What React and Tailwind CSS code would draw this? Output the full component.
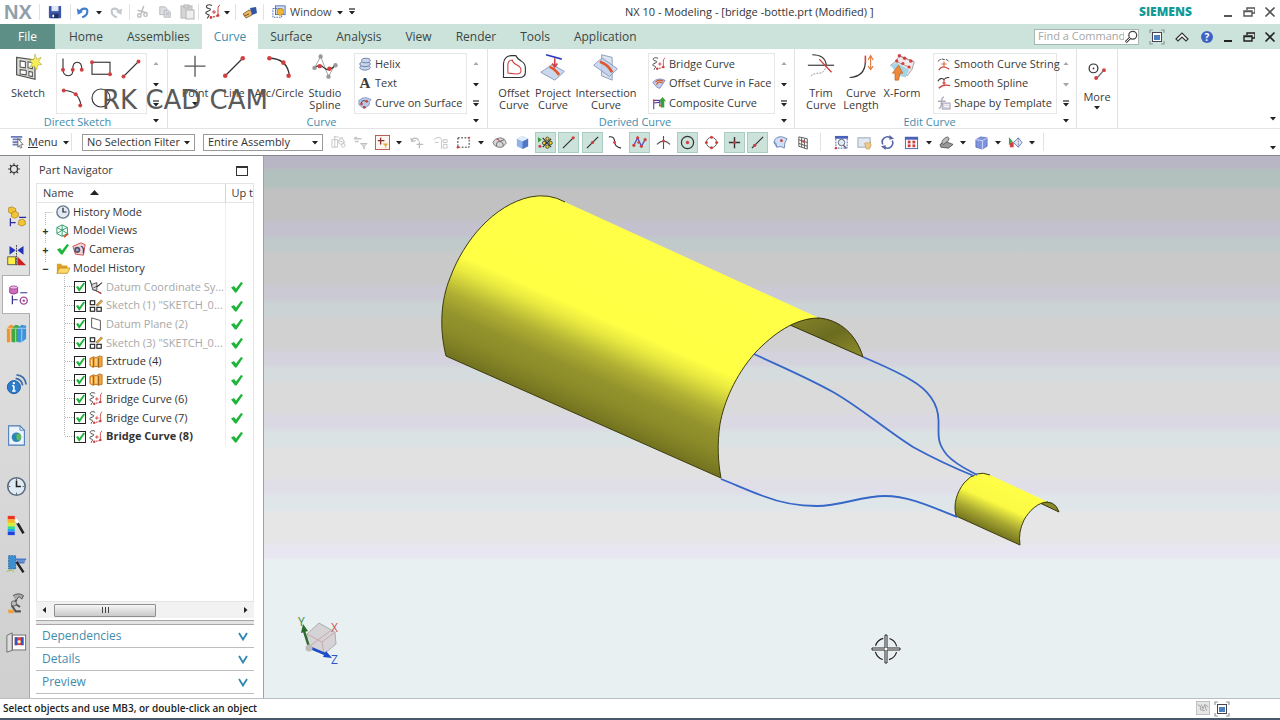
import React, { useState } from 'react';

const K = '#333';
const R = '#d04040';

// 16x16 toolbar and tree icons
const small = {
  save: <><rect x="1" y="1" width="14" height="14" rx="1" fill="#3c55a8" /><rect x="4" y="1" width="8" height="6" fill="#dfe6f7" /><rect x="4" y="10" width="8" height="5" fill="#1f2f66" /><rect x="5" y="11" width="2" height="3" fill="#fff" /></>,
  undo: <><path d="M4 8c3-5 9-5 9-1 0 4-3 6-6 7" fill="none" stroke="#3f7fd0" strokeWidth="2.4" /><path d="M1 4l1 7 6-3z" fill="#3f7fd0" /></>,
  redo: <><path d="M12 8c-3-5-9-5-9-1 0 4 3 6 6 7" fill="none" stroke="#c3c8cc" strokeWidth="2.4" /><path d="M15 4l-1 7-6-3z" fill="#c3c8cc" /></>,
  cut: <g fill="none" stroke="#bbb" strokeWidth="1.6"><path d="M10 1L7 10M3 6l11 3" /><circle cx="5" cy="12" r="2" /><circle cx="12" cy="11" r="2" /></g>,
  copy: <g fill="#dcdde2" stroke="#b5b7bf"><path d="M2 2h6l2 2v7H2z" /><path d="M7 6h5l2 2v6H7z" /><path d="M9 9h4M9 11h4" /></g>,
  paste: <g fill="#d5d5d5" stroke="#b5b5b5"><rect x="2" y="2" width="11" height="12" /><rect x="5" y="1" width="5" height="3" /><rect x="7" y="6" width="8" height="9" fill="#eee" /></g>,
  bridge: <><path d="M7 1.500C4 0 1 1 1.500 3s4 1 4 2.500S2 7 1 8.500s2 1.500 3 2.500-2 2-1.500 3.500" fill="none" stroke="#444" strokeWidth="1.100" /><path d="M5 13.500l5-1 3-1" fill="none" stroke={R} strokeWidth="1.300" strokeDasharray="2 1" /><path d="M15 1c-2 1-2 3-2 5v5M9 6v4M7 8h4" fill="none" stroke={R} strokeWidth="1" /><circle cx="6" cy="13.500" r="1.400" fill={R} /><circle cx="13" cy="11.500" r="1.400" fill={R} /></>,
  hand: <><path d="M1 10l6-4 4 1-1 4-6 3z" fill="#e8b765" stroke="#7a5520" strokeWidth=".8" /><path d="M8 4l6-1 1 6-5 2z" fill="#3355a8" /><path d="M2 12l5-2" stroke="#7a5520" /></>,
  win: <><rect x="4" y="1" width="11" height="10" fill="#cfe0f8" stroke="#4468b0" /><rect x="1" y="4" width="10" height="10" fill="none" stroke="#4468b0" strokeDasharray="2 1" /><path d="M6 5l4-1 3 1v5l-4 2-3-2z" fill="#f2b632" stroke="#b57d10" strokeWidth=".7" /></>,
  helix: <g fill="#c9d5e8" stroke="#5e78a8"><ellipse cx="8" cy="12" rx="6" ry="3" /><ellipse cx="8" cy="8" rx="6" ry="3" /><ellipse cx="9" cy="4" rx="5" ry="2.6" /></g>,
  surfCurve: <><path d="M1 5q4-4 9-3l5 2q-3 2-2 6l-5 4q-4-1-7-4z" fill="#b9c8e6" stroke="#7088b8" strokeWidth=".8" /><path d="M4 10C3 5 7 4 10 7M6 12l3 1" fill="none" stroke="#333" /><circle cx="4" cy="9" r="1.5" fill={R} /><circle cx="10" cy="6" r="1.5" fill={R} /><circle cx="7" cy="13" r="1.4" fill={R} /></>,
  offsetFace: <><path d="M1 7q6-6 14-2l-6 9q-4 0-8-7z" fill="#c6cfee" stroke="#6470b8" strokeWidth=".8" /><path d="M5 10q3-5 7-2M4 7q4-4 9-1" fill="none" stroke="#d05a2a" strokeWidth="1.4" /></>,
  composite: <><path d="M2 15V5h7v6M2 8l8-1" fill="none" stroke="#5a3c9a" strokeWidth="1.2" /><path d="M10 13V6H8l4-5 4 5h-2v7z" fill="#38a038" /><circle cx="2" cy="5" r="1.1" fill={R} /><circle cx="9" cy="11" r="1.1" fill={R} /></>,
  smoothString: <><path d="M1 5q4-4 7-2 4-1 6 3" fill="none" stroke={K} strokeDasharray="4 1" /><path d="M2 15q4-7 12-1" fill="none" stroke={R} strokeWidth="1.4" /><path d="M8 5v6M5 8h6" stroke="#e06a3a" strokeWidth="1.3" /></>,
  smoothSpline: <><path d="M1 6q3-5 7-2 3-3 6-2" fill="none" stroke={K} strokeWidth="1.2" /><path d="M2 14q5-5 13-3M8 4v6M6 8h4" fill="none" stroke={R} strokeWidth="1.4" /></>,
  shapeTpl: <><path d="M8 1Q5 2 5 8t-3 6M1 6h9M5 9l3 1" fill="none" stroke="#b0aab8" strokeWidth="1.6" /><rect x="6" y="8" width="9" height="7" fill="#d4cfdc" stroke="#aaa3b4" /><path d="M8 10h6M8 12h6" stroke="#fff" /></>,
  menu: <><path d="M1 2h13M3 5h10M3 8h7M3 11h6" stroke="#6d7ab8" strokeWidth="2" /><path d="M9 4l6 7-3 .3 1.500 3-1.600.7-1.400-3L9 14z" fill="#fff" stroke="#444" strokeWidth=".8" /></>,
  filt1: <g fill="none" stroke="#c4c4c4"><path d="M1 5h6v8H1zM3 2h5M4 1v12M8 6l7 2M9 3h4" /><circle cx="11" cy="7" r="3" /><circle cx="13" cy="11" r="2" /></g>,
  filt2: <><path d="M1 4h8M1 4l3-2M6 7H2" stroke="#c4c4c4" strokeWidth="1.6" /><path d="M8 9h7l-3 3v3l-1-3z" fill="#ddd" stroke="#bbb" /></>,
  filt3: <><rect x=".5" y=".5" width="15" height="15" fill="#fdf6ee" stroke="#b85450" /><path d="M6 3v7M3 6h7" stroke="#883030" strokeWidth="1.4" /><path d="M8 9h6l-2 3v2h-1v-2z" fill="#e8a93c" /></>,
  filt4: <g fill="none" stroke="#bcbcbc" strokeWidth="1.4"><path d="M2 6q1-4 6-2l1 2M1 3l1 4 4-1M10 7v7M7 10h7" /></g>,
  filt5: <g fill="none" stroke="#c4c4c4"><path d="M1 5q3-4 7-2l2 3M2 8h4M9 6v9M11 5h4v3h-4zM11 10h4v4h-4z" /></g>,
  marquee: <><rect x="2" y="3" width="12" height="10" fill="none" stroke={K} strokeDasharray="2 1.5" /><circle cx="2" cy="13" r="1.3" fill={R} /><circle cx="14" cy="3" r="1.1" fill={R} /></>,
  dome: <><path d="M1 8q1-4 8-5 6 1 6 6l-4 4q-8 1-10-5z" fill="#d6d6da" stroke="#777" /><path d="M5 12q-1-5 3-5t4 5M8 7l5-2" fill="none" stroke="#666" /><path d="M5 4l3 2" stroke={R} strokeWidth="1.200" /></>,
  cubeBlue: <><path d="M8 1l6 3v8l-6 3-6-3V4z" fill="#8fb2ea" /><path d="M8 1l6 3-6 3-6-3z" fill="#e2edfc" /><path d="M8 7l6-3v8l-6 3z" fill="#4f77c4" /></>,
  snapAll: <><path d="M0 2l4 3-4 3z" fill="#3a9b3a" /><path d="M5 3l9 10M14 4l-9 9" stroke={K} strokeWidth="1.200" /><g fill="#f0d020" stroke="#333" strokeWidth=".8"><circle cx="10" cy="4" r="1.800" /><circle cx="13.500" cy="8.500" r="1.800" /><circle cx="6.500" cy="8.500" r="1.800" /><circle cx="10" cy="12.500" r="1.800" /></g><circle cx="2" cy="12" r="1.600" fill={R} /></>,
  endPt: <><path d="M2 14L13 3" stroke={K} strokeWidth="1.3" /><circle cx="13" cy="3" r="1.7" fill={R} /></>,
  midPt: <><path d="M2 14L14 2" stroke={K} strokeWidth="1.3" /><circle cx="8" cy="8" r="1.7" fill={R} /></>,
  ctrlPt: <><path d="M1 2q6-1 6 5t7 7" fill="none" stroke={K} strokeWidth="1.2" /><circle cx="7" cy="8" r="1.5" fill={R} /></>,
  splinePt: <><path d="M2 11L6 3l4 9 4-7" fill="none" stroke="#5a4cc0" strokeWidth="1.4" /><g fill={R}><circle cx="2" cy="11" r="1.7" /><circle cx="6" cy="3" r="1.7" /><circle cx="10" cy="12" r="1.7" /><circle cx="14" cy="5" r="1.7" /><circle cx="7" cy="8" r="1.4" /></g></>,
  interPt: <><path d="M8 1v14M1 10q7-7 14 0" fill="none" stroke="#555" strokeWidth="1.2" /><circle cx="8" cy="6.500" r="1.5" fill={R} /></>,
  center: <><circle cx="8" cy="8" r="6.500" fill="none" stroke={K} strokeWidth="1.3" /><circle cx="8" cy="8" r="1.8" fill={R} /></>,
  quad: <><circle cx="8" cy="8" r="5.500" fill="none" stroke="#555" /><g fill={R}><circle cx="8" cy="2.500" r="1.6" /><circle cx="8" cy="13.500" r="1.6" /><circle cx="2.500" cy="8" r="1.6" /><circle cx="13.500" cy="8" r="1.6" /></g></>,
  exist: <><path d="M8 2v12M2 8h12" stroke={K} strokeWidth="1.5" /><circle cx="8" cy="8" r="1.4" fill={R} /></>,
  onCurve: <><path d="M2 14L14 2" stroke={K} strokeWidth="1.3" /><circle cx="5" cy="11" r="1.8" fill={R} /></>,
  face: <><path d="M1 8q1-7 9-6l5 2q-3 3-3 10-3-3-8-1z" fill="#cfdff5" stroke="#6b86b8" /><path d="M1 8q2-2 3 5" fill="none" stroke="#6b86b8" /><circle cx="9" cy="6" r="1.5" fill={R} /></>,
  grid: <g fill="none" stroke="#555"><path d="M3 2l9 2v11l-9-3zM6 3v10M9 4v10M3 5l9 3M3 9l9 3" /><circle cx="8" cy="7" r="1.3" fill={R} stroke="none" /></g>,
  fit: <><rect x="1" y="1" width="14" height="3" fill="#4b60b8" /><path d="M2 4v10h12V4" fill="none" stroke="#4b60b8" strokeDasharray="2 1" /><circle cx="8" cy="8" r="3.500" fill="#dcecf5" stroke="#667" /><path d="M10 11l3 3" stroke="#667" strokeWidth="1.6" /><circle cx="2" cy="14" r="1.3" fill={R} /></>,
  pan: <><rect x="1" y="3" width="13" height="10" fill="#e2e8f2" stroke="#9aa4b8" /><path d="M8 9l2-1 2 1 2-2 1 4-2 4h-3z" fill="#edc98a" stroke="#c09a55" strokeWidth=".7" /></>,
  rotate: <><path d="M3 10a5.500 5.500 0 0 1 8-7M13 6a5.500 5.500 0 0 1-8 7" fill="none" stroke="#5866a8" strokeWidth="1.7" /><path d="M10 0l5 4-5 1zM6 16l-5-4 5-1z" fill="#5866a8" /></>,
  views: <><rect x="1.500" y="2.500" width="13" height="12" fill="#fff" stroke="#4b60b8" /><rect x="1" y="2" width="14" height="3" fill="#4b60b8" /><g fill={R}><rect x="4" y="6" width="3" height="3" /><rect x="9" y="6" width="3" height="3" /><rect x="4" y="10" width="3" height="3" /><rect x="9" y="10" width="3" height="3" /></g></>,
  shade: <><path d="M1 10l6-3 8 3-5 4-8-1z" fill="#999" stroke="#444" strokeWidth=".8" /><path d="M3 9Q3 4 9 2q3 1 1 4L5 10z" fill="#bbb" stroke="#444" strokeWidth=".8" /></>,
  cube: <><path d="M2 5l5-3 7 1v9l-5 3-7-2z" fill="#7d93e0" stroke="#5064b0" strokeWidth=".7" /><path d="M2 5l7 1 5-3M9 6v9" fill="none" stroke="#d2dbfa" /></>,
  clip: <><path d="M1 2l4 5-4 4z" fill="#42a350" /><path d="M2 9l4-2v6H2z" fill={R} /><path d="M6 8l5-5 4 5-4 5z" fill="#e2e8f5" stroke="#6a7ab0" /><path d="M11 3v10" stroke="#6a7ab0" strokeDasharray="2 1" /></>,
  clock: <><circle cx="8" cy="8" r="7" fill="#e2ebf5" stroke="#69788a" strokeWidth="1.6" /><path d="M8 3v5h4" fill="none" stroke="#222" strokeWidth="1.4" /></>,
  modelViews: <><path d="M7 1l6 3v7l-6 3-6-3V4zM1 4l6 3 6-3M7 1v13M1 11l6-4 6 4" fill="none" stroke="#2c9c6c" strokeWidth="1.1" /><path d="M9 15l5-4" stroke="#d4502c" strokeWidth="2" /></>,
  camera: <><path d="M1 5l9-4 5 2-2 12-9-1z" fill="#f5d6d6" stroke="#d03c3c" /><circle cx="6" cy="9" r="3.500" fill="#556" /><circle cx="6" cy="9" r="1.5" fill="#9ad" /><path d="M10 5q4 0 3 8" fill="none" stroke="#334a99" strokeWidth="1.6" /></>,
  folder: <><path d="M1 3h5l1 2h6v9H1z" fill="#dda225" /><path d="M4 8h12l-3 6H1z" fill="#ffd968" stroke="#b98318" strokeWidth=".8" /></>,
  csys: <><path d="M1 0l4 11 9 4M5 11l10-8" fill="none" stroke="#333" strokeWidth="1.2" /><path d="M3 5l6-2v9l-5-1zM5 9l7-3" fill="#ddd" stroke="#333" strokeWidth=".9" /><path d="M10 13l4 3" stroke={R} strokeWidth="1.4" /></>,
  sketch: <><g fill="none" stroke="#222" strokeWidth="1.3"><rect x="1.500" y="2" width="5" height="4.500" /><rect x="1.500" y="9.500" width="5" height="4.500" /><rect x="9" y="9.500" width="5" height="4.500" /></g><path d="M8 7l6-6 1.500 1.500L10 8z" fill="#e8a93c" stroke="#7a5520" strokeWidth=".6" /></>,
  plane: <path d="M3 1l10 3v11L3 12z" fill="#fff" stroke="#444" />,
  extrude: <><path d="M1 4l4-2 3 1 4-2 3 1v11l-4 1-3-1-4 1-3-2z" fill="#f2a640" stroke="#a8600f" strokeWidth=".8" /><path d="M5 3v11M11 3v11" stroke="#8a520c" /><path d="M3 5v7M8 4v8" stroke="#ffe0a8" strokeWidth="1.500" /></>,
};

// 32x32 ribbon icons
const large = {
  sketch: <><path d="M3 5l21 3v22L3 25z" fill="#d9ddd5" stroke="#555" strokeWidth="1.400" /><path d="M7 9l6 1v7l-6-1zM16 10l5 1v7l-5-1zM7 19l7 1v5l-7-1zM17 21l4 1v5l-4-1z" fill="#fff" stroke="#555" strokeWidth="1.200" /><path d="M24 1l2 6 5-2-3 5 4 3-5 1-1 5-3-4-5 1 3-4-3-4 5-1z" fill="#f5ee5a" stroke="#aaa235" strokeWidth=".6" /></>,
  point: <path d="M16 3v24M4 15h24" stroke="#555" strokeWidth="1.500" />,
  line: <><path d="M6 26L26 6" stroke={K} strokeWidth="1.5" /><circle cx="6" cy="26" r="2.600" fill={R} /><circle cx="26" cy="6" r="2.600" fill={R} /></>,
  arc: <><path d="M5 6q20 0 23 20" fill="none" stroke={K} strokeWidth="1.5" /><circle cx="5" cy="6" r="2.600" fill={R} /><circle cx="21" cy="11" r="2.600" fill={R} /><circle cx="27" cy="26" r="2.600" fill={R} /></>,
  spline: <><path d="M4 17L11 4l9 23 7-13" fill="none" stroke="#999" /><path d="M4 17q6-5 11 0t13-3" fill="none" stroke={K} strokeWidth="1.3" /><g fill="#999"><circle cx="4" cy="17" r="2.500" /><circle cx="11" cy="4" r="2.500" /><circle cx="20" cy="27" r="2.500" /><circle cx="28" cy="14" r="2.500" /></g><circle cx="10" cy="15" r="2.500" fill={R} /><circle cx="21" cy="18" r="2.500" fill={R} /></>,
  offset: <><path d="M4 28V12q1-9 9-9h5q2 4 6 6 5 3 5 8v5q0 6-7 6z" fill="#fff" stroke={K} strokeWidth="1.3" /><path d="M9 23V14q0-6 5-6 1 4 6 6 4 2 4 6t-5 4z" fill="none" stroke={R} strokeWidth="1.2" /></>,
  project: <><path d="M2 22q9-6 13-9l14 8q-4 4-11 10z" fill="#cbd9ee" stroke="#8295b8" /><path d="M12 16q5 1 11 9" fill="none" stroke="#e0572e" strokeWidth="3" /><path d="M8 2l18 5" stroke="#2c3cc0" strokeWidth="1.8" /><path d="M18 6v9M15 12l3 4 3-4" fill="none" stroke={R} strokeWidth="1.8" /></>,
  intersect: <><path d="M11 2l12 3v26l-12-5z" fill="#dce4ee" stroke="#8295b8" /><path d="M2 14q7-7 10-8l17 12-9 9z" fill="#bfd0ec" stroke="#8295b8" fillOpacity=".8" /><path d="M9 10q9 3 14 12" fill="none" stroke="#e0572e" strokeWidth="3" /></>,
  trim: <><path d="M1 14h30" stroke={K} strokeWidth="1.3" /><path d="M6 2q15 0 16 12" fill="none" stroke={K} strokeWidth="1.3" /><path d="M22 14q-2 9-8 9-6 0-11 4" fill="none" stroke="#777" strokeDasharray="2 1.500" /><path d="M14 7l14 15" stroke={R} strokeWidth="1.6" /></>,
  length: <><path d="M3 28q17-1 18-17" fill="none" stroke={K} strokeWidth="1.4" /><path d="M21 12V3" stroke={R} strokeWidth="1.8" /><path d="M27 4v14M24 8l3-5 3 5M24 15l3 4 3-4" fill="none" stroke="#e07a3a" strokeWidth="1.3" /></>,
  xform: <><path d="M3 14q6-3 10-11l17 7q-1 9-8 16z" fill="#f1e8ea" stroke="#999" /><path d="M3 14l7-3 14 8-4 9-9-3z" fill="#a3d5e6" /><g stroke="#b98080" fill="none"><path d="M12 3l17 7M8 9l18 8" /></g><g fill={R}><circle cx="13" cy="3" r="2" /><circle cx="19" cy="6" r="2" /><circle cx="26" cy="9" r="2" /><circle cx="10" cy="9" r="1.800" /><circle cx="17" cy="12" r="1.800" /><circle cx="24" cy="16" r="1.800" /></g><path d="M8 31v-8H5l7-9 5 9h-3l-2 8z" fill="#f08a3a" stroke="#b85a18" strokeWidth=".7" /></>,
  more: <><circle cx="12" cy="13" r="5" fill="none" stroke={K} strokeWidth="1.4" /><circle cx="12" cy="13" r="1" fill={K} /><path d="M16 24l7-8" stroke="#777" strokeWidth="1.6" /><circle cx="15" cy="24" r="2.200" fill={R} /><circle cx="24" cy="15" r="2.200" fill={R} /></>,
  profile: <><path d="M4 2v14q0 9 7 9t6-9q0-9 6-9t6 9" fill="none" stroke={K} strokeWidth="1.500" /><g fill={R}><circle cx="4" cy="17" r="2.600" /><circle cx="17" cy="17" r="2.600" /><circle cx="29" cy="17" r="2.600" /></g></>,
  rect: <><rect x="4" y="7" width="24" height="16" fill="none" stroke={K} strokeWidth="1.5" /><circle cx="4" cy="7" r="2.600" fill={R} /><circle cx="28" cy="23" r="2.600" fill={R} /></>,
  circle: <circle cx="16" cy="16" r="12" fill="none" stroke={K} strokeWidth="1.500" />,
};

// resource bar icons, 24x24
const side = {
  gear: <><circle cx="12" cy="12" r="6" fill="none" stroke="#333" strokeWidth="2" /><path d="M12 2v4M12 18v4M2 12h4M18 12h4M5 5l3 3M16 16l3 3M19 5l-3 3M5 19l3-3" stroke="#333" strokeWidth="2" /></>,
  assembly: <><g fill="#f3c535" stroke="#a87e12" strokeWidth=".8"><path d="M3 2l4-1 4 2v5l-5 1-3-2z" /><path d="M7 7l4-1 3 2v4l-4 2-4-2z" /><path d="M15 16l4-1 3 2v4l-4 2-4-2z" /></g><path d="M5 14v9M5 19h6M15 13h8" stroke="#2a2aa0" strokeWidth="1.4" fill="none" /></>,
  constraint: <><path d="M4 1l7 5-7 5zM20 1l-7 5 7 5z" fill="#2233b8" /><path d="M12 0v24" stroke="#333" strokeDasharray="2 1" /><rect x="2" y="13.500" width="9" height="9" fill="#ffee44" stroke="#555" /><path d="M13 13v10h10z" fill="#c82222" /></>,
  part: <><path d="M2 4q5-3 9 0v6q-5 3-9 0z" fill="#cf6bc0" stroke="#8a3380" /><ellipse cx="6.500" cy="4" rx="4.500" ry="1.800" fill="#eeb5e6" stroke="#8a3380" strokeWidth=".7" /><path d="M5 13v10M5 18h6M14 10h8" stroke="#333388" strokeWidth="1.4" fill="none" /><circle cx="18" cy="19" r="4" fill="none" stroke="#a04a98" strokeWidth="1.6" /><circle cx="18" cy="19" r="1.400" fill="#a04a98" /></>,
  books: <><path d="M1 6l4-4 4 1v17l-4 2H1z" fill="#f0922e" /><path d="M7 6l4-4 4 1v17l-4 2H7z" fill="#3aa845" /><path d="M13 6l5-4 5 1v15l-5 4h-5z" fill="#3d93dc" /><path d="M5 7v15M11 7v15M18 7v15M1 6h22" stroke="#fff" strokeWidth=".8" opacity=".8" /></>,
  info: <><circle cx="9" cy="15" r="7.500" fill="#2e7ccc" stroke="#1b5a9c" /><path d="M9 13.500v6M7 13.500h2M7 19.500h4" stroke="#fff" strokeWidth="1.800" /><circle cx="9" cy="10.500" r="1.300" fill="#fff" /><path d="M11 5q7 1 8 8M12 1q10 1 11 11" fill="none" stroke="#3c6ca8" strokeWidth="2" /></>,
  web: <><path d="M3 1h13l5 5v17H3z" fill="#edf3fa" stroke="#4a7bb8" strokeWidth="1.2" /><path d="M16 1v5h5" fill="none" stroke="#4a7bb8" /><circle cx="12" cy="14" r="5.500" fill="#2c86b8" /><path d="M9 11q4-2 3 2t3 5q4-4 1-8z" fill="#63b858" /></>,
  clock: <><circle cx="12" cy="12" r="10" fill="#dfeaf5" stroke="#596a80" strokeWidth="1.800" /><path d="M12 5v7h5" fill="none" stroke="#222" strokeWidth="1.800" /><path d="M12 3v2M12 19v2M3 12h2M19 12h2" stroke="#555" /></>,
  palette: <><rect x="2" y="1" width="8" height="4" fill="#ee3322" /><rect x="2" y="5" width="8" height="4" fill="#ffb522" /><rect x="2" y="9" width="8" height="4" fill="#d8ee33" /><rect x="2" y="13" width="8" height="3" fill="#33dd88" /><rect x="2" y="16" width="8" height="3" fill="#22aaee" /><rect x="2" y="19" width="8" height="4" fill="#2244dd" /><path d="M13 9l7 12" stroke="#222" strokeWidth="3" /><path d="M11 5l3 4" stroke="#fff" strokeWidth="3" /></>,
  film: <><path d="M3 2h8v15H3z" fill="#3d8fd0" stroke="#20639c" strokeDasharray="2 1" /><path d="M11 6h12M13 10h8M12 8h10" stroke="#4d77c8" strokeWidth="1.5" /><path d="M12 9l8 12" stroke="#222" strokeWidth="2.800" /><path d="M1 20l5-2 3 3" stroke="#90b830" fill="none" /></>,
  tools: <><path d="M8 3q6-4 12 0l-2 4-3-3-4 5" fill="#aaa" stroke="#444" /><path d="M12 8l-5 7 4 6h6M10 12l6 4" fill="none" stroke="#555" strokeWidth="2.400" /><circle cx="9" cy="12" r="3" fill="#bbb" stroke="#555" /><path d="M2 19h7v4H3z" fill="#f0a03a" /></>,
  roles: <><path d="M1 4l6-3v20l-6 2z" fill="#ddd" stroke="#666" /><rect x="7.500" y="3.500" width="15" height="17" fill="#fff" stroke="#666" /><rect x="10" y="6" width="10" height="9" fill="#e04030" /><path d="M10 6h3v9h-3M17 6h3v9h-3" fill="#3355cc" /><circle cx="15" cy="11" r="2" fill="#ffe9a8" /></>,
};

function Icon({ name, className = 'size-4' }) {
  return <svg viewBox="0 0 16 16" className={`${className} shrink-0`} aria-hidden="true">{small[name]}</svg>;
}

function Caret({ up, faded, bar }) {
  return (
    <svg viewBox="0 0 8 8" className={`size-2 shrink-0 ${faded ? 'text-[#a5a5a5]' : 'text-[#222]'}`} aria-hidden="true">
      {bar && <path d="M1 1h6" stroke="currentColor" strokeWidth="1.2" />}
      <path d={up ? 'M1.500 6h5L4 3z' : 'M1 3h6L4 6.500z'} fill="currentColor" />
    </svg>
  );
}

function CheckMark() {
  return (
    <svg viewBox="0 0 14 12" className="h-3 w-3.5 shrink-0" aria-hidden="true">
      <path d="M1 6.500l3-1.500 2 2.500L11 1l2 1-6.500 9.500H5z" fill="#1fb53a" />
    </svg>
  );
}

function Sep({ className = 'mx-1' }) {
  return <div className={`w-px self-stretch bg-[#e2e2e2] ${className}`} />;
}

function WindowButtons({ dark }) {
  const color = dark ? 'text-[#222]' : 'text-[#555]';
  return (
    <div className={`flex items-center ${color}`}>
      <button aria-label="Minimize" className="flex w-[21px] justify-center">
        <svg viewBox="0 0 12 12" className="size-3"><path d="M2 10h8" stroke="currentColor" strokeWidth="2" /></svg>
      </button>
      <button aria-label="Restore" className="flex w-[21px] justify-center">
        <svg viewBox="0 0 12 12" className="size-3"><path d="M4 4V2h8v5H9M1 5h8v5H1zM1 5.500h8" fill="none" stroke="currentColor" strokeWidth="1.400" /></svg>
      </button>
      <button aria-label="Close" className="flex w-[21px] justify-center">
        <svg viewBox="0 0 12 12" className="size-3"><path d="M1.500 1.500l9 9M10.500 1.500l-9 9" stroke="currentColor" strokeWidth="1.600" /></svg>
      </button>
    </div>
  );
}

function TitleBar() {
  return (
    <header className="flex h-6 items-center bg-white">
      <div className="w-[39px] pl-1 font-['Liberation_Sans',sans-serif] text-[20px] leading-6 font-bold text-[#8fa0ab]">NX</div>
      <Sep className="my-1" />
      <button aria-label="Save" className="flex w-[30px] justify-center"><Icon name="save" className="size-3.5" /></button>
      <Sep className="my-1" />
      <button aria-label="Undo" className="flex w-6 justify-center"><Icon name="undo" className="size-3.5" /></button>
      <Caret />
      <button aria-label="Redo" className="flex w-[26px] justify-center"><Icon name="redo" className="size-3.5" /></button>
      <Sep className="my-1" />
      <button aria-label="Cut" className="flex w-6 justify-center"><Icon name="cut" className="size-3.5" /></button>
      <button aria-label="Copy" className="flex w-[22px] justify-center"><Icon name="copy" className="size-3.5" /></button>
      <button aria-label="Paste" className="flex w-[22px] justify-center"><Icon name="paste" className="size-4" /></button>
      <Sep className="my-1 mr-1" />
      <button aria-label="Bridge Curve" className="flex w-5 justify-center"><Icon name="bridge" className="size-4" /></button>
      <Caret />
      <Sep className="my-1 ml-1" />
      <button aria-label="Touch Mode" className="flex w-[27px] justify-center"><Icon name="hand" className="size-4" /></button>
      <Sep className="my-1" />
      <button className="flex items-center gap-1 pl-2 text-[11px] text-[#444]">
        <Icon name="win" className="size-3.5" />Window<Caret />
      </button>
      <button aria-label="Customize toolbar" className="flex w-4 justify-center"><Caret bar /></button>
      <div className="flex-1 text-center text-[11px] text-[#333]">NX 10 - Modeling - [bridge -bottle.prt (Modified) ]</div>
      <div className="w-[78px] text-[12px] font-extrabold text-[#119b98]">SIEMENS</div>
      <WindowButtons />
    </header>
  );
}

const tabs = ['Home', 'Assemblies', 'Curve', 'Surface', 'Analysis', 'View', 'Render', 'Tools', 'Application'];

function TabBar({ active, onSelect }) {
  return (
    <nav className="flex h-[25px] items-center bg-[#cce3db] text-[12px] text-[#3c4644]">
      <button className="mr-0.5 h-full w-[55px] bg-[#5d8f86] text-white">File</button>
      {tabs.map((tab) => (
        <button
          key={tab}
          onClick={() => onSelect(tab)}
          className={`h-full px-3 ${tab === active ? 'bg-white text-[#3f8cad]' : ''}`}
        >
          {tab}
        </button>
      ))}
      <div className="ml-auto flex h-4 w-[105px] items-center border border-[#a9b7b3] bg-white">
        <input aria-label="Find a Command" placeholder="Find a Command" className="w-[89px] pl-[3px] text-[11px] outline-none placeholder:text-[#a5a5a5]" />
        <svg viewBox="0 0 16 16" className="size-3.5 shrink-0" aria-hidden="true">
          <circle cx="10" cy="6" r="4.500" fill="#fff" stroke="#444" strokeWidth="1.400" /><path d="M7 9l-5 5" stroke="#444" strokeWidth="3" /><path d="M7 9l-5 5" stroke="#fff" />
        </svg>
      </div>
      <button aria-label="Full Screen" className="ml-2 flex w-5 justify-center"><FullScreenIcon /></button>
      <button aria-label="Minimize Ribbon" className="flex w-[30px] justify-center">
        <svg viewBox="0 0 14 12" className="h-3 w-3.5"><path d="M1 8l6-6 6 6-2 2-4-4-4 4z" fill="#fff" stroke="#333" strokeWidth="1.200" /></svg>
      </button>
      <button aria-label="Help" className="flex w-5 justify-center">
        <span className="flex size-3 items-center justify-center rounded-full bg-[#3d62c4] text-[10px] leading-3 font-bold text-white">?</span>
      </button>
      <WindowButtons dark />
    </nav>
  );
}

function FullScreenIcon() {
  return (
    <svg viewBox="0 0 16 16" className="size-4" aria-hidden="true">
      <path d="M1 4V1h3M12 1h3v3M15 12v3h-3M4 15H1v-3" fill="none" stroke="#8a9a98" strokeWidth="1.200" />
      <rect x="3.500" y="3.500" width="9" height="9" fill="#fff" stroke="#445" />
      <rect x="5" y="6" width="6" height="5" fill="#4a7fc4" />
    </svg>
  );
}

function BigButton({ icon, label, width = 'w-10', caret }) {
  return (
    <button className={`flex ${width} shrink-0 flex-col items-center text-[11px] leading-3 text-[#3a3a3a]`}>
      <svg viewBox="0 0 32 32" className="mt-1 mb-1 size-7 shrink-0" aria-hidden="true">{large[icon]}</svg>
      <span className="mt-0.5">{label}</span>
      {caret && <Caret />}
    </button>
  );
}

function GalleryArrows({ downFaded }) {
  return (
    <div className="flex w-[18px] shrink-0 flex-col items-center pt-2.5">
      <button aria-label="Scroll up" className="flex h-[21px] shrink-0"><Caret up faded /></button>
      <button aria-label="Scroll down" className="flex h-5 shrink-0"><Caret faded={downFaded} /></button>
      <button aria-label="Expand gallery" className="flex h-4 shrink-0"><Caret bar /></button>
      <button aria-label="Group options" className="flex h-2 shrink-0"><Caret /></button>
    </div>
  );
}

function GalleryList({ items, width, label }) {
  return (
    <ul aria-label={label} className={`mt-1 flex h-[61px] ${width} shrink-0 flex-col justify-around border border-[#e6e6e6] pl-[3px] text-[11px] text-[#3a3a3a]`}>
      {items.map((item) => (
        <li key={item.text} className="flex">
          <button className="flex items-center gap-[3px] whitespace-nowrap">
            {item.icon === 'A'
              ? <span className="w-3.5 font-['Liberation_Serif',serif] text-[15px] leading-4 font-bold" aria-hidden="true">A</span>
              : <Icon name={item.icon} className="size-3.5" />}
            {item.text}
          </button>
        </li>
      ))}
    </ul>
  );
}

function Group({ title, children, className = '' }) {
  return (
    <section className={`shrink-0 border-r border-[#e2e2e2] ${className}`}>
      <div className="flex h-[67px]">{children}</div>
      <h2 className="pr-3 text-center text-[11px] leading-3 text-[#3f8cad]">{title}</h2>
    </section>
  );
}

function Ribbon() {
  return (
    <div className="relative flex h-20 border-b border-[#e4e4e4] bg-white">
      <Group title="Direct Sketch" className="w-[168px]">
        <BigButton icon="sketch" label="Sketch" width="w-14" />
        <div className="mt-1 grid h-[61px] w-[91px] shrink-0 grid-cols-3 grid-rows-2 place-items-center border border-[#e6e6e6]">
          {['profile', 'rect', 'line', 'arc', 'circle'].map((name) => (
            <button key={name} aria-label={name}>
              <svg viewBox="0 0 32 32" className="size-6" aria-hidden="true">{large[name]}</svg>
            </button>
          ))}
        </div>
        <GalleryArrows />
      </Group>
      <Group title="Curve" className="w-[320px]">
        <div className="flex w-[186px] shrink-0 pl-2">
          <BigButton icon="point" label="Point" width="w-[38px]" caret />
          <BigButton icon="line" label="Line" width="w-[40px]" />
          <BigButton icon="arc" label="Arc/Circle" width="w-[50px]" />
          <BigButton icon="spline" label={<>Studio<br />Spline</>} width="w-[42px]" />
        </div>
        <GalleryList label="Curves" width="w-[113px]" items={[{ icon: 'helix', text: 'Helix' }, { icon: 'A', text: 'Text' }, { icon: 'surfCurve', text: 'Curve on Surface' }]} />
        <GalleryArrows />
      </Group>
      <Group title="Derived Curve" className="w-[307px]">
        <div className="flex w-[160px] shrink-0 pl-1.5">
          <BigButton icon="offset" label={<>Offset<br />Curve</>} width="w-10" />
          <BigButton icon="project" label={<>Project<br />Curve</>} width="w-[38px]" />
          <BigButton icon="intersect" label={<>Intersection<br />Curve</>} width="w-[68px]" />
        </div>
        <GalleryList label="Derived curves" width="w-[127px]" items={[{ icon: 'bridge', text: 'Bridge Curve' }, { icon: 'offsetFace', text: 'Offset Curve in Face' }, { icon: 'composite', text: 'Composite Curve' }]} />
        <GalleryArrows />
      </Group>
      <Group title="Edit Curve" className="w-[282px]">
        <div className="flex w-[138px] shrink-0 pl-1.5">
          <BigButton icon="trim" label={<>Trim<br />Curve</>} width="w-10" />
          <BigButton icon="length" label={<>Curve<br />Length</>} width="w-10" />
          <BigButton icon="xform" label="X-Form" width="w-[42px]" />
        </div>
        <GalleryList label="Edit curves" width="w-[124px]" items={[{ icon: 'smoothString', text: 'Smooth Curve String' }, { icon: 'smoothSpline', text: 'Smooth Spline' }, { icon: 'shapeTpl', text: 'Shape by Template' }]} />
        <GalleryArrows downFaded />
      </Group>
      <div className="flex w-[41px] shrink-0 justify-center border-r border-[#e2e2e2] pt-1">
        <BigButton icon="more" label="More" caret />
      </div>
      <button aria-label="Ribbon options" className="mr-[3px] ml-auto self-end pb-1.5"><Caret /></button>
      <div className="pointer-events-none absolute top-[37px] left-[102px] font-['DejaVu_Sans',sans-serif] text-[26px] leading-7 whitespace-nowrap text-[#5a5a5a]">
        RK CAD CAM
      </div>
    </div>
  );
}

const snapTools = [
  { name: 'filt1', w: 'w-[22px]' },
  { name: 'filt2', w: 'w-[22px]' },
  { name: 'filt3', w: 'w-[22px]' },
  { name: 'caret', w: 'w-3' },
  { name: 'filt4', w: 'w-6' },
  { name: 'filt5', w: 'w-[22px]' },
  { name: 'marquee', w: 'w-6' },
  { name: 'caret', w: 'w-3' },
  { name: 'dome', w: 'w-6' },
  { name: 'cubeBlue', w: 'w-[22px]' },
  { name: 'snapAll', w: 'w-6', on: true },
  { name: 'endPt', w: 'w-[23px]', on: true },
  { name: 'midPt', w: 'w-6', on: true },
  { name: 'ctrlPt', w: 'w-[22px]' },
  { name: 'splinePt', w: 'w-[26px]', on: true },
  { name: 'interPt', w: 'w-[22px]' },
  { name: 'center', w: 'w-[26px]', on: true },
  { name: 'quad', w: 'w-[22px]' },
  { name: 'exist', w: 'w-[25px]', on: true },
  { name: 'onCurve', w: 'w-[21px]', on: true },
  { name: 'face', w: 'w-[24px]' },
  { name: 'grid', w: 'w-[22px]' },
];

const viewTools = [
  { name: 'fit', w: 'w-6' },
  { name: 'pan', w: 'w-[22px]' },
  { name: 'rotate', w: 'w-6' },
  { name: 'views', w: 'w-6' },
  { name: 'caret', w: 'w-3' },
  { name: 'shade', w: 'w-[22px]' },
  { name: 'caret', w: 'w-3' },
  { name: 'cube', w: 'w-6' },
  { name: 'caret', w: 'w-2.5' },
  { name: 'clip', w: 'w-6' },
  { name: 'caret', w: 'w-2.5' },
];

function ToolRow({ tools }) {
  return tools.map((tool, i) => (
    <button key={i} aria-label={tool.name} aria-pressed={tool.on} className={`flex ${tool.w} justify-center`}>
      {tool.name === 'caret' ? <Caret /> : (
        <span className={`flex size-[21px] shrink-0 items-center justify-center ${tool.on ? 'border border-[#aacdc2] bg-[#cce3db]' : ''}`}>
          <Icon name={tool.name} className="size-[15px]" />
        </span>
      )}
    </button>
  ));
}

function FilterSelect({ label, options, width }) {
  return (
    <div className={`relative ${width}`}>
      <select aria-label={label} className="block h-[17px] w-full appearance-none border border-[#9a9a9a] bg-white pl-1 text-[11px] leading-[14px] text-[#333]">
        {options.map((option) => <option key={option}>{option}</option>)}
      </select>
      <span className="pointer-events-none absolute inset-y-0 right-1 flex items-center"><Caret /></span>
    </div>
  );
}

function SelectionBar() {
  return (
    <div className="flex h-[27px] items-center border-b border-[#85858d] bg-white">
      <button className="flex w-[71px] items-center gap-1 pl-2.5 text-[11px] text-[#333]">
        <Icon name="menu" className="size-3.5" />
        <span><u>M</u>enu</span>
        <Caret />
      </button>
      <Sep className="my-1 mr-2.5" />
      <FilterSelect label="Selection filter" width="w-[113px]" options={['No Selection Filter', 'Curve', 'Face', 'Edge']} />
      <div className="w-2" />
      <FilterSelect label="Selection scope" width="w-[120px]" options={['Entire Assembly', 'Within Work Part Only']} />
      <div className="w-1" />
      <ToolRow tools={snapTools} />
      <Sep className="my-1 mr-2 ml-1.5" />
      <ToolRow tools={viewTools} />
      <Sep className="my-1 ml-1.5" />
      <button aria-label="Toolbar options" className="mr-[3px] ml-auto self-end pb-1"><Caret /></button>
    </div>
  );
}

const resources = ['assembly', 'constraint', 'part', 'books', 'info', 'web', 'clock', 'palette', 'film', 'tools', 'roles'];

function ResourceBar({ selected, onSelect }) {
  return (
    <div className="flex w-[30px] flex-col border-r border-[#a8a8a8] bg-linear-to-b from-[#e6e6e6] to-[#cfcfcf]">
      <button aria-label="Settings" className="mb-[15px] flex h-[26px] items-center justify-center pr-0.5">
        <svg viewBox="0 0 24 24" className="size-3.5">{side.gear}</svg>
      </button>
      {resources.map((name) => (
        <button
          key={name}
          aria-label={name}
          onClick={() => onSelect(name)}
          className={`flex h-[39px] shrink-0 items-center justify-center pl-1 ${['info', 'web', 'clock'].includes(name) ? 'mt-3' : ''} ${name === selected ? '-mr-px ml-0.5 border-y border-l border-[#b0b0b0] bg-white pl-0' : ''}`}
        >
          <svg viewBox="0 0 24 24" className="size-[21px]" aria-hidden="true">{side[name]}</svg>
        </button>
      ))}
    </div>
  );
}

const tree = [
  { text: 'History Mode', icon: 'clock' },
  { text: 'Model Views', icon: 'modelViews', sign: '+' },
  { text: 'Cameras', icon: 'camera', sign: '+', check: true },
  { text: 'Model History', icon: 'folder', sign: '-' },
  { text: 'Datum Coordinate Sy...', icon: 'csys', child: true, faded: true },
  { text: 'Sketch (1) "SKETCH_0...', icon: 'sketch', child: true, faded: true },
  { text: 'Datum Plane (2)', icon: 'plane', child: true, faded: true },
  { text: 'Sketch (3) "SKETCH_0...', icon: 'sketch', child: true, faded: true },
  { text: 'Extrude (4)', icon: 'extrude', child: true },
  { text: 'Extrude (5)', icon: 'extrude', child: true },
  { text: 'Bridge Curve (6)', icon: 'bridge', child: true },
  { text: 'Bridge Curve (7)', icon: 'bridge', child: true },
  { text: 'Bridge Curve (8)', icon: 'bridge', child: true, bold: true },
];

function TreeRow({ node }) {
  const [checked, setChecked] = useState(true);
  const tone = node.faded ? 'text-[#a8a8a8]' : 'text-[#333]';
  return (
    <tr>
      <td className="border-r border-[#f0f0f0] p-0">
        {node.child ? (
          <label className={`flex items-center gap-[3px] pl-[37px] whitespace-nowrap ${tone} ${node.bold ? 'font-bold' : ''}`}>
            <span className="relative flex size-3">
              <input type="checkbox" checked={checked} onChange={(e) => setChecked(e.target.checked)} className="size-3 appearance-none border border-[#222] bg-white" />
              {checked && (
                <svg viewBox="0 0 12 12" className="pointer-events-none absolute inset-0 size-3" aria-hidden="true"><path d="M2 6l2-1 1.500 2L9.500 1.500l1.500 1L5.500 10.500H5z" fill="#1fb53a" /></svg>
              )}
            </span>
            <Icon name={node.icon} className="size-3.5" />
            {node.text}
          </label>
        ) : (
          <div className="flex items-center gap-0.5 pl-[4px] text-[#333]">
            <span className="mr-1 flex size-[9px] items-center justify-center bg-white text-[11px] leading-[9px] font-bold">{node.sign === '-' ? '−' : node.sign}</span>
            {node.check && <CheckMark />}
            <Icon name={node.icon} className="mr-px size-3.5" />
            {node.text}
          </div>
        )}
      </td>
      <td className="p-0">{node.child && <div className="flex justify-center pr-1"><CheckMark /></div>}</td>
    </tr>
  );
}

function PartNavigator() {
  return (
    <aside className="flex w-[234px] flex-col border-r border-[#a0a0a0] bg-white pr-[9px] pl-[6px] text-[11px]">
      <div className="flex h-[27px] items-center justify-between pt-0.5 pr-1.5 pl-[3px] text-[#3a3a3a]">
        Part Navigator
        <button aria-label="Undock" className="h-[10px] w-3 border border-t-2 border-[#333]" />
      </div>
      <div className="relative flex-1 border border-[#e4e4e4]">
        <table className="h-[262px] w-full table-fixed border-collapse">
          <thead>
            <tr className="h-[18px] border-b border-[#e4e4e4] text-left text-[#3a3a3a]">
              <th className="w-[188px] border-r border-[#d4d4d4] p-0 pl-1.5 leading-4 font-normal">
                <span className="flex items-center gap-4">Name
                  <svg viewBox="0 0 9 5" className="h-[5px] w-[9px]" aria-hidden="true"><path d="M0 5h9L4.500 0z" fill="#222" /></svg>
                </span>
              </th>
              <th className="overflow-hidden p-0 pl-1.5 leading-4 font-normal whitespace-nowrap">Up t</th>
            </tr>
          </thead>
          <tbody>
            {tree.map((node) => <TreeRow key={node.text} node={node} />)}
          </tbody>
        </table>
        <svg className="pointer-events-none absolute top-0 left-0 h-[263px] w-[38px]" aria-hidden="true">
          <path d="M8.500 28V41M8.500 50V60M8.500 69V78M8.500 28.500h8M27.500 92V252" fill="none" stroke="#b5b5b5" strokeDasharray="1 1" />
          {tree.filter((n) => n.child).map((n, i) => (
            <path key={n.text} d={`M28 ${Math.round(102 + i * 18.700)}.5h9`} stroke="#b5b5b5" strokeDasharray="1 1" />
          ))}
        </svg>
      </div>
      <div className="flex h-4 items-center bg-[#f2f2f2]">
        <button aria-label="Scroll left" className="flex w-[18px] rotate-90 justify-center"><Caret /></button>
        <div className="flex h-[13px] w-[102px] items-center justify-center gap-[2px] rounded-[1px] border border-[#8f8f8f] bg-linear-to-b from-[#f5f5f5] to-[#c9c9c9]">
          <i className="h-1.5 w-px bg-[#444]" /><i className="h-1.5 w-px bg-[#444]" /><i className="h-1.5 w-px bg-[#444]" />
        </div>
        <button aria-label="Scroll right" className="ml-auto flex w-[18px] -rotate-90 justify-center"><Caret /></button>
      </div>
      <div className="mt-0.5 h-[5px] border-y border-[#a8a8a8] bg-[#e4e4e4]" />
      <div className="pb-1">
        {['Dependencies', 'Details', 'Preview'].map((title) => (
          <button key={title} className="flex h-[23px] w-full items-center justify-between border-b border-[#bdbdbd] px-1.5 text-[12px] text-[#3f8cad]">
            {title}
            <svg viewBox="0 0 10 9" className="h-[9px] w-2.5" aria-hidden="true"><path d="M1 1l4 6.500L9 1" fill="none" stroke="#2f86b0" strokeWidth="1.800" /></svg>
          </button>
        ))}
      </div>
    </aside>
  );
}

function Scene() {
  return (
    <svg viewBox="264 156 1016 542" preserveAspectRatio="xMinYMin meet" className="absolute inset-0 size-full" role="img" aria-label="Bottle model">
      <defs>
        <linearGradient id="body" gradientUnits="userSpaceOnUse" x1="565" y1="202" x2="488" y2="375">
          <stop offset="0" stopColor="#ffff48" />
          <stop offset=".48" stopColor="#ffff44" />
          <stop offset=".56" stopColor="#e6e640" />
          <stop offset=".68" stopColor="#b0b034" />
          <stop offset=".78" stopColor="#94942d" />
          <stop offset=".88" stopColor="#8a8a29" />
          <stop offset="1" stopColor="#72721f" />
        </linearGradient>
        <linearGradient id="neck" gradientUnits="userSpaceOnUse" x1="990" y1="475" x2="969" y2="522">
          <stop offset="0" stopColor="#ffff48" />
          <stop offset=".45" stopColor="#fafa44" />
          <stop offset=".75" stopColor="#a8a832" />
          <stop offset="1" stopColor="#74741e" />
        </linearGradient>
        <linearGradient id="inside" x1="0" y1="0" x2="1" y2="1">
          <stop offset="0" stopColor="#84842a" />
          <stop offset=".5" stopColor="#6c6c20" />
          <stop offset="1" stopColor="#8e8e2c" />
        </linearGradient>
      </defs>

      {/* bottle body */}
      <path d="M790 325Q804 318 819 318C840 320 856 334 863 357Z" fill="url(#inside)" stroke="#33330c" />
      <path d="M446 356C439 328 441 300 450 278C464 240 494 205 530 197Q549 193 565 202L819 318C795 318 773 334 755 353C735 376 724 402 720 424C717 444 718 462 721 478Z" fill="url(#body)" />
      <path d="M565 202Q549 193 530 197C494 205 464 240 450 278C441 300 439 328 446 356L721 478C718 462 717 444 720 424C724 402 735 376 755 353C773 334 795 318 819 318" fill="none" stroke="#3c3c10" />

      {/* neck */}
      <path d="M1040 503Q1055 499 1059 512Z" fill="#8a8a2a" stroke="#33330c" />
      <path d="M956 516C953 504 957 492 964 483Q976 469 990 475L1048 502C1038 502 1029 511 1024 520Q1018 532 1020 545Z" fill="url(#neck)" />
      <path d="M990 475Q976 469 964 483C957 492 953 504 956 516L1020 545Q1018 532 1024 520C1029 511 1038 502 1048 502" fill="none" stroke="#3c3c10" />

      {/* bridge curves */}
      <g fill="none" stroke="#3566c8" strokeWidth="1.800">
        <path d="M863 357C882 365 898 372 911 380C930 391 938 404 938.500 420C939 434 936 442 947 455C955 464 966 469 977 475" />
        <path d="M754 354C782 367 808 378 833 392C861 408 886 430 913 447C931 457 952 467 974 476" />
        <path d="M721 479C736 485 749 491 763 496C781 503 799 506 817 506C841 506 861 496 885 496C910 496 934 508 957 517" />
      </g>

      {/* view triad */}
      <path d="M307 634l12-11 16 9 1 12-12 10-16-6z" fill="#d5d3d5" stroke="#b0acb0" />
      <path d="M307 634l15 8 13-10M322 642l2 12M310 646l20-15" fill="none" stroke="#c9a9ad" />
      <path d="M309 647l-5-16" stroke="#2c6b2c" strokeWidth="2.500" />
      <path d="M303 624l-2 9 7-2z" fill="#2c6b2c" />
      <path d="M311 648l14 6" stroke="#1c4cc8" strokeWidth="2.500" />
      <path d="M332 658l-9-1 3-6z" fill="#1c4cc8" />
      <circle cx="309" cy="648" r="3.500" fill="#bbb" />
      <g className="text-[12px]">
        <text x="298" y="626" fill="#3a8a3a">Y</text>
        <text x="331" y="632" fill="#cc5555">X</text>
        <text x="331" y="664" fill="#2c55cc">Z</text>
      </g>

      {/* pointer */}
      <circle cx="886" cy="649" r="11" fill="none" stroke="#222" strokeWidth="1.200" strokeDasharray="11 6.280" strokeDashoffset="-3.140" />
      <path d="M885 635h2v13h13v2h-13v13h-2v-13h-13v-2h13z" fill="#fff" stroke="#222" />
    </svg>
  );
}

function Viewport() {
  return (
    <main className="relative min-w-0 flex-1 bg-[linear-gradient(#b8b6c4_0_11px,#b3c1be_15px_30px,#c1c1c1_34px_61px,#c3c1cd_68px_78px,#c0cacb_84px_92px,#c9c9c9_99px_126px,#cbc9d3_132px_142px,#cbd3d5_148px_158px,#d1d1d1_164px_191px,#d4d2dc_197px_207px,#d5dcde_213px_223px,#dadada_229px_255px,#dad9e3_261px_271px,#dae2e4_277px_288px,#e1e1e1_294px_320px,#e0dfe9_326px_336px,#dfe6ea_342px_352px,#e6e6e7_358px_385px,#e8e6f0_391px_401px,#e9f0f2_404px)]">
      <Scene />
    </main>
  );
}

function StatusBar() {
  return (
    <footer className="flex h-[22px] items-center border-t border-b-2 border-t-[#b9bec2] border-b-[#4a586c] bg-white pl-[3px] text-[10px] font-semibold text-[#222]">
      <span>Select objects and use MB3, or double-click an object</span>
      <div className="mr-[50px] ml-auto flex gap-1">
        <svg viewBox="0 0 16 16" className="size-3.5" aria-hidden="true"><rect x=".5" y=".5" width="15" height="15" fill="#e6e6e6" stroke="#bbb" /><path d="M2 4l3 2v4M6 4l2 5 2-5 2 7M11 4l3 3M5 10l5 1" fill="none" stroke="#999" /></svg>
        <FullScreenIcon />
      </div>
    </footer>
  );
}

function App() {
  const [tab, setTab] = useState('Curve');
  const [resource, setResource] = useState('part');

  return (
    <div className="flex h-screen flex-col overflow-hidden bg-white font-['Open_Sans','Noto_Sans',sans-serif]">
      <TitleBar />
      <TabBar active={tab} onSelect={setTab} />
      <Ribbon />
      <SelectionBar />
      <div className="flex min-h-0 flex-1">
        <ResourceBar selected={resource} onSelect={setResource} />
        <PartNavigator />
        <Viewport />
      </div>
      <StatusBar />
    </div>
  );
}

export default App;
